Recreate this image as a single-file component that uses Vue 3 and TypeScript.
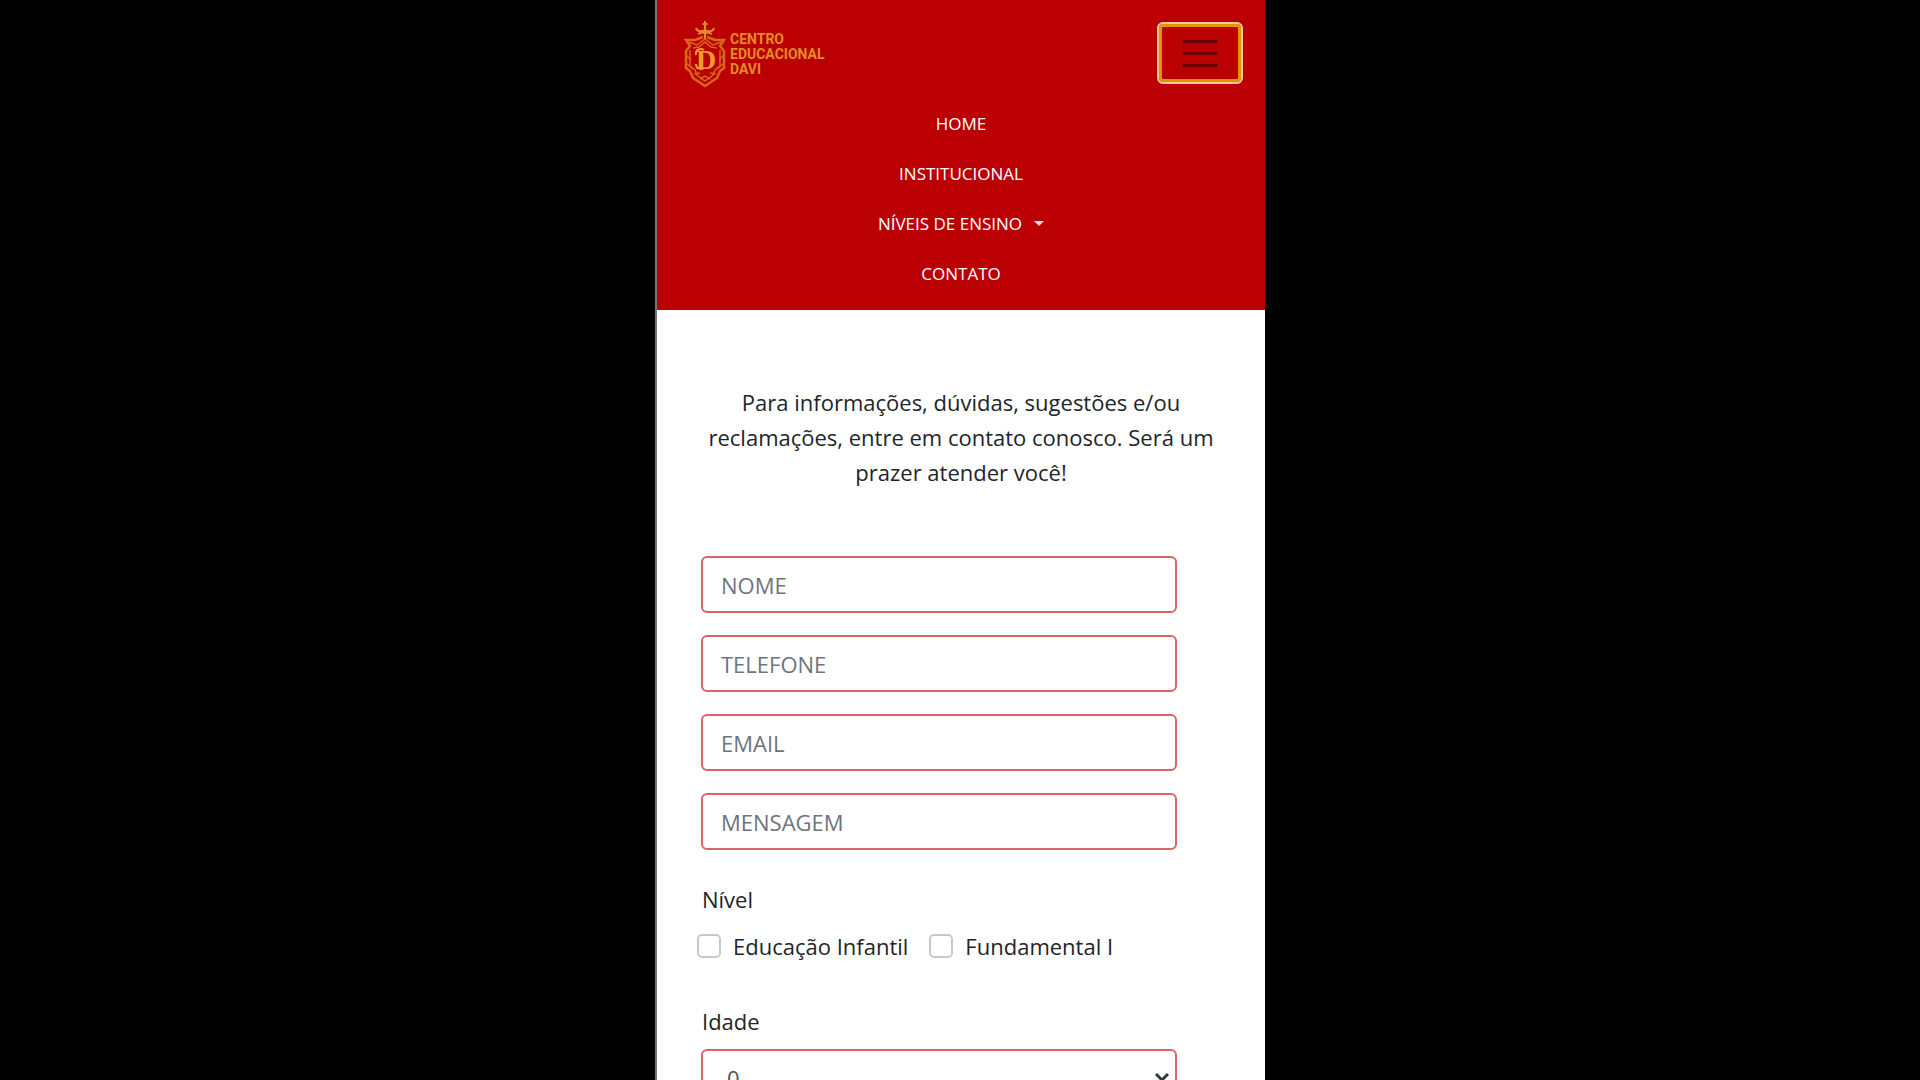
<script setup lang="ts">
import { ref } from 'vue'

interface Field {
  id: string
  label: string
  type: string
}

const links: string[] = ['HOME', 'INSTITUCIONAL', 'NÍVEIS DE ENSINO', 'CONTATO']
const submenuLink = 'NÍVEIS DE ENSINO'

const fields: Field[] = [
  { id: 'nome', label: 'NOME', type: 'text' },
  { id: 'telefone', label: 'TELEFONE', type: 'tel' },
  { id: 'email', label: 'EMAIL', type: 'email' },
  { id: 'mensagem', label: 'MENSAGEM', type: 'text' },
]

const levels: string[] = ['Educação Infantil', 'Fundamental I']
const chosen = ref<string[]>([])
const age = ref(0)
const menuOpen = ref(true)
</script>

<template>
  <div class="page">
    <div class="column">
      <header class="header">
        <div class="bar">
          <a class="brand" href="#" aria-label="Centro Educacional Davi">
            <svg class="crest" viewBox="0 0 42 68" fill="none" stroke="#d9661c" stroke-width="2">
              <path d="M21 1v18M12 8c1 4 6 4 9 2c3 2 8 2 9-2M14 14c3-2 11-2 14 0M18.500 4h5" stroke="#e58a28" />
              <path d="M19 17L11 20L2 20L6 26L2 31V48L6 51L9 58L21 66L33 58L36 51L40 48V31L36 26L40 20L31 20L23 17" stroke-width="2.500" />
              <path d="M5 22l8 3l8-6l8 6l8-3M9 28l6-1l6-5l6 5l6 1" stroke-width="1.500" />
              <path d="M6 30v16l5 4l2 5l8 6l8-6l2-5l5-4V30" stroke-width="1.500" />
              <path d="M2 35l5 5M2 43l7 6M40 35l-5 5M40 43l-7 6M10 54l6-1M32 54l-6-1M16 59l5-3l5 3" stroke-width="1.500" />
              <path d="M12 35c-1-6 5-7 8-5M12 44c0 5 5 6 8 4" stroke="#ee9d2c" stroke-width="2" />
              <text x="22" y="49" text-anchor="middle" class="monogram">D</text>
            </svg>
            <span class="brand-name">
              <span>CENTRO</span>
              <span>EDUCACIONAL</span>
              <span>DAVI</span>
            </span>
          </a>
          <button class="toggler" type="button" aria-label="Menu" :aria-expanded="menuOpen" @click="menuOpen = !menuOpen">
            <span class="line"></span>
            <span class="line"></span>
            <span class="line"></span>
          </button>
        </div>
        <nav v-if="menuOpen" class="nav">
          <a v-for="link in links" :key="link" class="nav-link" href="#">
            {{ link }}<span v-if="link === submenuLink" class="caret"></span>
          </a>
        </nav>
      </header>

      <main class="content">
        <p class="intro">
          Para informações, dúvidas, sugestões e/ou reclamações, entre em contato conosco. Será um prazer atender você!
        </p>
        <form class="form" @submit.prevent>
          <input
            v-for="field in fields"
            :id="field.id"
            :key="field.id"
            class="control"
            :type="field.type"
            :placeholder="field.label"
            :aria-label="field.label"
          />
          <fieldset class="levels">
            <legend class="caption">Nível</legend>
            <div class="checks">
              <label v-for="level in levels" :key="level" class="check">
                <input v-model="chosen" class="box" type="checkbox" :value="level" />
                {{ level }}
              </label>
            </div>
          </fieldset>
          <label class="caption" for="idade">Idade</label>
          <div class="select-wrap">
            <select id="idade" v-model="age" class="control select">
              <option v-for="n in 18" :key="n" :value="n - 1">{{ n - 1 }}</option>
            </select>
            <svg class="chevron" viewBox="0 0 14 10" fill="none" stroke="#343a40" stroke-width="3">
              <path d="M1 1l6 6l6-6" />
            </svg>
          </div>
        </form>
      </main>
    </div>
  </div>
</template>

<style>
body {
  margin: 0;
  background: #000;
}
</style>

<style scoped>
.page {
  display: flex;
  justify-content: center;
  height: 100vh;
  overflow: hidden;
  background: #000;
  color: #212529;
  font-family: "Open Sans", "Noto Sans", sans-serif;
  font-size: 22px;
}
.column {
  box-sizing: border-box;
  width: 100%;
  max-width: 610px;
  border-left: 2px solid #777;
  background: #fff;
}
.header {
  padding-bottom: 12px;
  background: #ba0003;
}
.bar {
  display: flex;
  align-items: center;
  justify-content: space-between;
  height: 106px;
  margin-bottom: -8px;
  padding: 0 22px 0 27px;
}
.brand {
  display: flex;
  align-items: center;
  gap: 4px;
  padding-top: 2px;
  color: #e58a28;
  text-decoration: none;
}
.crest {
  width: 42px;
  height: 68px;
}
.monogram {
  fill: #ee9d2c;
  stroke: none;
  font: bold 28px "Liberation Serif", serif;
}
.brand-name {
  display: flex;
  flex-direction: column;
  font: bold 14px/15px Roboto, sans-serif;
}
.toggler {
  display: flex;
  flex-direction: column;
  align-items: center;
  justify-content: center;
  gap: 9px;
  width: 86px;
  height: 62px;
  padding: 0;
  border: 2px solid #f4c9a0;
  border-radius: 6px;
  background: none;
  box-shadow: inset 0 0 0 3px #e59400;
}
.line {
  width: 36px;
  height: 3px;
  background: #6d0002;
}
.nav {
  display: flex;
  flex-direction: column;
  align-items: center;
}
.nav-link {
  display: flex;
  align-items: center;
  height: 50px;
  color: #fff;
  font-size: 17px;
  text-decoration: none;
}
.caret {
  margin-left: 12px;
  border: 5px solid transparent;
  border-top-color: #f6dcdc;
  border-bottom: 0;
}
.content {
  padding: 75px 44px 0;
}
.intro {
  margin: 0 0 66px;
  line-height: 35px;
  text-align: center;
}
.form {
  display: flex;
  flex-direction: column;
  width: 476px;
  max-width: 100%;
}
.control {
  box-sizing: border-box;
  width: 100%;
  height: 57px;
  margin: 0 0 22px;
  padding: 0 18px;
  border: 2px solid #d9646a;
  border-radius: 6px;
  background: #fff;
  color: #495057;
  font: inherit;
}
.control::placeholder {
  color: #6c757d;
  opacity: 1;
}
.levels {
  margin: 9px 0 28px;
  padding: 0;
  border: 0;
}
.caption {
  padding: 0 0 0 1px;
  line-height: 36px;
}
.checks {
  display: flex;
  gap: 21px;
  margin-left: -4px;
}
.check {
  display: flex;
  align-items: center;
  gap: 12px;
  height: 58px;
  white-space: nowrap;
}
.box {
  box-sizing: border-box;
  width: 24px;
  height: 24px;
  margin: 0;
  border: 2px solid #c3c9ce;
  border-radius: 5px;
  background: #fff;
  appearance: none;
}
.box:checked {
  background: #ba0003;
}
.select-wrap {
  position: relative;
  margin-top: 10px;
}
.select {
  padding: 0 24px;
  appearance: none;
}
.chevron {
  position: absolute;
  top: 24px;
  right: 8px;
  width: 14px;
  height: 10px;
  pointer-events: none;
}
</style>
